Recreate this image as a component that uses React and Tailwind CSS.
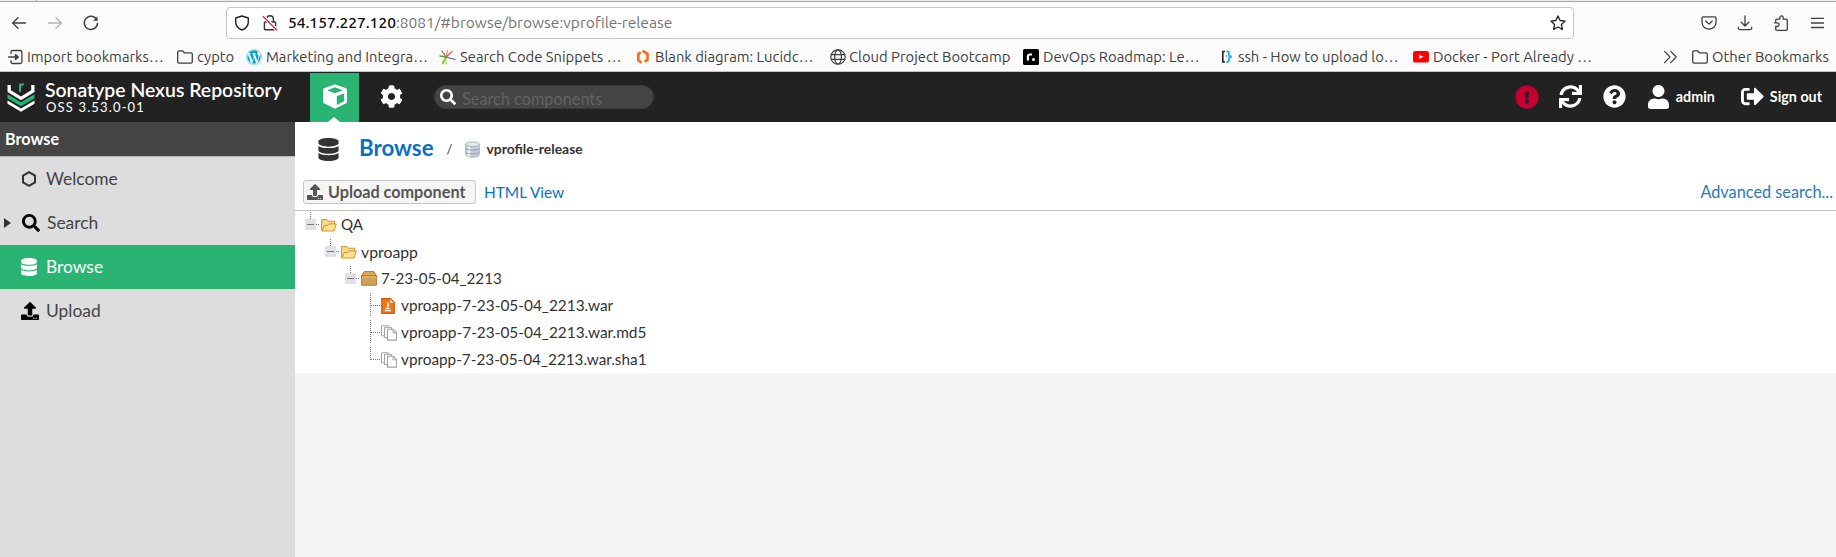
import React from 'react';
import { FaCog, FaSearch, FaExclamationCircle, FaSync, FaQuestionCircle, FaUser, FaSignOutAlt, FaDatabase, FaUpload, FaWordpress } from 'react-icons/fa';

const chromeFont = "font-['Ubuntu','Noto_Sans',sans-serif]";
const appFont = "font-['Proxima_Nova','Lato',sans-serif]";

function Line({ size = 16, className = '', width = 1.3, children }) {
  return (
    <svg width={size} height={size} viewBox="0 0 16 16" fill="none" stroke="currentColor" strokeWidth={width} strokeLinecap="round" strokeLinejoin="round" className={`shrink-0 ${className}`}>
      {children}
    </svg>
  );
}

const Folder = () => (
  <Line><path d="M.7 12.800V3.200c0-.8.6-1.400 1.400-1.400h3.400l1.800 2h6.600c.8 0 1.400.6 1.400 1.400v7.600c0 .8-.6 1.400-1.400 1.400H2.100c-.8 0-1.400-.6-1.400-1.400z" /></Line>
);

const Import = () => (
  <Line><path d="M3 4.400V3c0-.9.7-1.500 1.500-1.500h7.800c.9 0 1.600.7 1.600 1.500v10c0 .9-.7 1.500-1.600 1.500H4.500C3.700 14.500 3 13.900 3 13v-1.400M.6 8h8.600" /><path d="M7.500 5.400 10.400 8l-2.900 2.600z" fill="currentColor" /></Line>
);

const Snippets = () => (
  <svg width="17" height="16" viewBox="0 0 17 16" fill="none" strokeWidth="1.2" strokeLinecap="round" className="shrink-0">
    <path d="M7 8 3.500 14.500" stroke="#7ac943" strokeWidth="1.800" />
    <path d="M7 8 1 7" stroke="#57a639" strokeWidth="1.600" />
    <path d="M7 8 7 15" stroke="#b9d94c" />
    <path d="M7 8 3 2" stroke="#7a5aa8" />
    <path d="M7 8 8.500 1" stroke="#f0a030" />
    <path d="M7 8 13 2.500" stroke="#e0506a" />
    <path d="M7 8 16 10.500" stroke="#5b5aa8" />
  </svg>
);

const Lucid = () => (
  <svg width="14" height="16" viewBox="0 0 14 16" fill="none" stroke="#f96b13" strokeWidth="2.600" className="shrink-0">
    <path d="M4.800 3.400 2.300 5v6.200l3.200 2.500" />
    <path d="M6.500 1.900l5 2.900v6L8.600 12.600" />
  </svg>
);

const Globe = () => (
  <Line width={1.2}><circle cx="8" cy="8" r="7.200" /><ellipse cx="8" cy="8" rx="3.400" ry="7.200" /><path d="M1.300 5.600h13.400M1.300 10.400h13.400" /></Line>
);

const Roadmap = () => (
  <svg width="16" height="16" viewBox="0 0 16 16" className="shrink-0">
    <rect width="16" height="16" rx="1.500" />
    <path d="M4.900 11.500V7.600c0-1.400.8-2.100 2.200-2.100H9" fill="none" stroke="#fff" strokeWidth="2.200" />
    <circle cx="10.500" cy="10.600" r="1.500" fill="#fff" />
  </svg>
);

const Braces = () => (
  <svg width="12" height="14" viewBox="0 0 12 14" fill="none" className="shrink-0">
    <path d="M4 1.500H1.800v10.500H4" stroke="#222" strokeWidth="1.600" />
    <path d="M5.500 1.500h1c1.200 0 1.500.6 1.500 1.600v1.700c0 1 .5 1.700 1.900 1.700v.6c-1.400 0-1.900.7-1.900 1.700v1.700c0 1-.3 1.500-1.500 1.500h-1" stroke="#1fb6f4" strokeWidth="1.900" />
    <path d="M5.600 5.600v.9" stroke="#222" strokeWidth="1.200" />
  </svg>
);

const Youtube = () => (
  <svg width="16" height="12" viewBox="0 0 16 12" className="shrink-0">
    <rect width="16" height="11.500" rx="2.600" fill="#f00" />
    <path d="M6.200 3.500v4.600l4.200-2.300z" fill="#fff" />
  </svg>
);

const bookmarks = [
  { label: 'Import bookmarks…', icon: <Import />, box: 'w-[169px] gap-[3px]' },
  { label: 'cypto', icon: <Folder />, box: 'w-[69px] gap-[4px]' },
  { label: 'Marketing and Integra…', icon: <FaWordpress className="size-4 shrink-0 text-[#0a9fd8]" />, box: 'w-[193px] gap-[4px]' },
  { label: 'Search Code Snippets …', icon: <Snippets />, box: 'w-[197px] gap-[4px]' },
  { label: 'Blank diagram: Lucidc…', icon: <Lucid />, box: 'w-[194px] gap-[5px]' },
  { label: 'Cloud Project Bootcamp', icon: <Globe />, box: 'w-[193px] gap-[3px]' },
  { label: 'DevOps Roadmap: Le…', icon: <Roadmap />, box: 'w-[198px] gap-[4px]' },
  { label: 'ssh - How to upload lo…', icon: <Braces />, box: 'w-[192px] gap-[5px]' },
  { label: 'Docker - Port Already …', icon: <Youtube />, box: 'gap-[4px]' },
];

function BrowserChrome() {
  return (
    <div className={`flex h-[72px] flex-col border-b border-[#c4c4c4] bg-[#fbfbfb] text-[#404040] ${chromeFont}`}>
      <div className="flex h-[2px] shrink-0 border-b border-[#a6a6a6] bg-[#ededed]">
        <div className="w-[37px] border-r border-[#a6a6a6]" />
      </div>
      <div className="flex h-[41px] shrink-0 items-center">
        <Line className="ml-[11px]" width={1.3}><path d="M14.500 8H1.500M7 2.800 1.600 8 7 13.200" /></Line>
        <Line className="ml-5 text-[#b3b3b3]"><path d="M1.500 8h13M9 2.800 14.400 8 9 13.200" /></Line>
        <Line className="ml-5" width={1.5}><path d="M13.800 4.800A6.600 6.600 0 1 0 14.500 8.600" /><path d="M14.500 1.300v4.500H10z" fill="currentColor" stroke="none" /></Line>
        <div className="ml-[127px] flex h-8 w-[1348px] items-center rounded border border-[#c4c4c4] bg-white">
          <Line className="ml-[7px] text-[#222]" width={1.4}><path d="M8 1 14.300 3v4c0 3.800-2.300 6.500-6.300 8-4-1.500-6.300-4.200-6.300-8V3z" /></Line>
          <Line className="ml-[12px] text-[#333]" width={1.4}>
            <path d="M4.600 7V4.200a3.400 3.400 0 0 1 6.800 0V7M3.200 7h9.600c.5 0 .8.300.8.800v5.900c0 .7-.5 1.100-1.100 1.100h-9c-.6 0-1.100-.4-1.100-1.100V7.800c0-.5.300-.8.800-.8z" />
            <path d="M1.500 1.500 15 15" stroke="#fff" strokeWidth="3.500" />
            <path d="M1.200 1.500 14.800 15" stroke="#e22850" />
          </Line>
          <div className="ml-[10px] text-[15.550px] whitespace-pre text-[#737373]"><span className="font-medium text-[#0c0c0d]">54.157.227.120</span>:8081/#browse/browse:vprofile-release</div>
          <Line className="mr-[7px] ml-auto text-[#222]" width={1.3}><path d="m8 .9 2.100 4.600 5 .6-3.700 3.400 1 5-4.400-2.500-4.400 2.500 1-5L.9 6.100l5-.6z" /></Line>
        </div>
        <div className="flex items-center gap-5 pl-[127px]">
          <Line><path d="M2.200 1.900h11.600c.7 0 1.200.5 1.200 1.100v4.500a7 6.600 0 0 1-14 0V3c0-.6.5-1.100 1.200-1.100zM4.800 6 8 9.100 11.200 6" /></Line>
          <Line><path d="M8 .8v10M4.200 7.200 8 11l3.800-3.800M1.300 12.200v.9c0 .9.600 1.500 1.500 1.500h10.400c.9 0 1.500-.6 1.500-1.500v-.9" /></Line>
          <Line><path d="M2.700 6.500V5.200c0-.7.400-1.100 1.100-1.100h3V2.600a1.700 1.700 0 0 1 3.400 0v1.500h3c.7 0 1.100.4 1.100 1.100v9c0 .7-.4 1.100-1.100 1.100H3.800c-.7 0-1.100-.4-1.100-1.100v-2.700h1.500a1.800 1.800 0 0 0 0-3.600H1.500" /></Line>
          <Line width={1.4}><path d="M2.500 3.400h12M2.500 8h12M2.500 12.500h12" /></Line>
        </div>
      </div>
      <div className="flex h-[28px] items-center pl-2 text-[14.800px] whitespace-nowrap">
        {bookmarks.map((b) => (
          <div key={b.label} className={`flex shrink-0 items-center ${b.box}`}>{b.icon}<span>{b.label}</span></div>
        ))}
        <div className="ml-auto flex items-center pr-[7px]">
          <Line className="mr-[14px]" width={1.2}><path d="M2.500 2.300 8 8l-5.500 5.700M8.700 2.300 14.200 8l-5.500 5.700" /></Line>
          <Folder />
          <span className="ml-1">Other Bookmarks</span>
        </div>
      </div>
    </div>
  );
}

const NexusLogo = () => (
  <svg width="28" height="30" viewBox="0 0 28 30" fill="none" className="shrink-0">
    <path d="M.5 3v7L14 18.300 27.500 10V3h-3.300v5.200L14 14.600 3.800 8.200V3z" fill="#fff" />
    <path d="M.5 12.300v4L14 24.300l13.500-8v-4L14 20.300z" fill="#1db974" />
    <path d="M.5 18.500v3.300L14 29.800l13.500-8v-3.300L14 26.500z" fill="#fff" />
    <path d="M13 10V1.500M13 5c.3-2 1.500-3 4-2.800" stroke="#1db974" strokeWidth="2" />
  </svg>
);

const CubeIcon = () => (
  <svg width="26" height="25" viewBox="0 0 26 25" className="shrink-0">
    <path d="M13 .8 24.500 5v13.500L13 24.200 1.500 18.500V5z" fill="#fff" stroke="#fff" strokeWidth="1" strokeLinejoin="round" />
    <path d="M13 3.300 20.800 6.200 13 9.300 5.200 6.200z" fill="#29b473" />
    <path d="M14.800 12.300 22.200 9.300v7.900l-7.400 3.700z" fill="#29b473" />
  </svg>
);

function Header() {
  return (
    <div className="flex h-[50px] shrink-0 items-center bg-[#222] text-white">
      <div className="flex w-[310px] items-center pl-[7px]">
        <NexusLogo />
        <div className="ml-[10px] whitespace-nowrap">
          <div className="text-[19.400px] leading-[20px] font-semibold">Sonatype Nexus Repository</div>
          <div className="pl-px text-[13px] leading-[15px] tracking-[1.150px]">OSS 3.53.0-01</div>
        </div>
      </div>
      <div className="relative mt-px flex h-[49px] w-[49px] items-center justify-center bg-[#29b473]">
        <div className="-mt-[3px]"><CubeIcon /></div>
        <div className="absolute bottom-0 left-[18px] border-x-[6px] border-b-[5px] border-x-transparent border-b-white" />
      </div>
      <FaCog className="-mt-[2px] ml-[21px] size-[23px]" />
      <div className="ml-[31px] flex h-[24px] w-[220px] items-center rounded-full border border-[#393939] bg-[#444]">
        <FaSearch className="ml-[5px] size-[16px]" />
        <span className="ml-[6px] pt-[3px] text-[16.300px] leading-5 text-[#626262]">Search components</span>
      </div>
      <div className="ml-auto flex items-center pr-[14px] pb-px text-[14.300px] font-bold">
        <FaExclamationCircle className="size-[24px] text-[#c70032]" />
        <FaSync className="ml-[20px] size-[23px]" />
        <FaQuestionCircle className="ml-[21px] size-[23px]" />
        <FaUser className="ml-[21px] h-[24px] w-[23px]" />
        <span className="ml-[6px]">admin</span>
        <FaSignOutAlt className="ml-[26px] size-[23px]" />
        <span className="ml-[6px]">Sign out</span>
      </div>
    </div>
  );
}

function Sidebar() {
  const row = 'flex h-11 items-center text-[17.400px] text-[#444]';
  return (
    <div className="flex w-[295px] shrink-0 flex-col bg-[#ddd]">
      <div className="flex h-[35px] items-center border-b border-[#b8b8b8] bg-[#444] pl-[5px] text-[16.200px] font-bold text-white">Browse</div>
      <div className={row}>
        <svg width="16" height="16" viewBox="0 0 16 16" className="ml-[21px]"><path d="M8 1.200 14 4.600v6.800L8 14.800 2 11.400V4.600z" fill="none" stroke="#333" strokeWidth="2" /></svg>
        <span className="ml-[9px]">Welcome</span>
      </div>
      <div className={row}>
        <svg width="7" height="10" viewBox="0 0 7 10" className="ml-[4px]"><path d="M0 0l7 5-7 5z" fill="#333" /></svg>
        <FaSearch className="ml-[11px] size-[18px] text-black" />
        <span className="ml-[7px]">Search</span>
      </div>
      <div className="flex h-11 items-center bg-[#29b473] text-[17.400px] text-white">
        <FaDatabase className="ml-[20px] size-[18px]" />
        <span className="ml-[8px]">Browse</span>
      </div>
      <div className={row}>
        <FaUpload className="ml-[21px] size-[18px] text-black" />
        <span className="ml-[7px]">Upload</span>
      </div>
    </div>
  );
}

const RepoIcon = () => (
  <svg width="15" height="17" viewBox="0 0 15 17" className="shrink-0">
    <path d="M.8 3v10.500C.8 15 3.500 16.200 7.500 16.200s6.700-1.200 6.700-2.700V3z" fill="#c5ced8" stroke="#a3adb8" />
    <path d="M4 5v10.500" stroke="#edf2f7" strokeWidth="3" />
    <ellipse cx="7.500" cy="3.200" rx="6.700" ry="2.300" fill="#e6ebf0" stroke="#a8b1ba" />
    <path d="M.8 7.400c1.300 2.200 12 2.200 13.400 0M.8 11.200c1.300 2.200 12 2.200 13.400 0" fill="none" stroke="#8d99a5" strokeWidth=".9" />
  </svg>
);

const OpenFolder = () => (
  <svg width="16" height="14" viewBox="0 0 16 14" className="shrink-0">
    <path d="M.6 12.800V1.600h5l1.200 1.600h6.700v3" fill="#f5d98c" stroke="#cf9436" />
    <path d="M.8 13 3.400 7.500h3.400l1.500-1.600h7L13 13z" fill="#fde28a" stroke="#cf9436" strokeLinejoin="round" />
  </svg>
);

const Crate = () => (
  <svg width="16" height="15" viewBox="0 0 16 15" className="shrink-0">
    <path d="M3.200.6h9.600l2.600 4.200H.6z" fill="#d9aa60" stroke="#b27a30" strokeLinejoin="round" />
    <path d="M.6 4.800h14.800v9.400H.6z" fill="#d2a057" stroke="#b27a30" strokeLinejoin="round" />
    <path d="M1.200 6h13.600" stroke="#ecc689" />
  </svg>
);

const WarFile = () => (
  <svg width="14" height="16" viewBox="0 0 14 16" className="shrink-0">
    <path d="M.8.8h8.700l3.700 3.700v10.700H.8z" fill="#f07818" stroke="#d95b08" strokeWidth="1.400" strokeLinejoin="round" />
    <path d="M9.500 1.500v3h3" fill="#ffc890" stroke="#fff" strokeWidth=".7" />
    <path d="M6.800 4.500v3.500M8 6.500 6.500 9.300M4.500 10.500h4.200M3.800 12.600h6" stroke="#fff" strokeWidth="1.300" />
  </svg>
);

const Copies = () => (
  <svg width="16" height="16" viewBox="0 0 16 16" fill="#fff" stroke="#a3a3a3" className="shrink-0">
    <path d="M.5.8h7v10h-7z" />
    <path d="M3.500 2.300h7v10.400h-7z" />
    <path d="M6.500 4.300h5.800l3.200 3.200v7.600h-9z" strokeWidth="1.100" />
    <path d="M12 4.500v3.300h3.300" fill="none" />
  </svg>
);

const tree = [
  { label: 'QA', icon: <OpenFolder />, pad: 'pl-[9px]', gap: 'ml-[4px] text-[15.200px]' },
  { label: 'vproapp', icon: <OpenFolder />, pad: 'pl-[29px]', gap: 'ml-[4px] text-[15.800px]' },
  { label: '7-23-05-04_2213', icon: <Crate />, pad: 'pl-[49px]', gap: 'ml-[4px] text-[15.200px]' },
  { label: 'vproapp-7-23-05-04_2213.war', icon: <WarFile />, pad: 'pl-[69px]', gap: 'ml-[6px] text-[15.400px]', leaf: true },
  { label: 'vproapp-7-23-05-04_2213.war.md5', icon: <Copies />, pad: 'pl-[69px]', gap: 'ml-[4px] text-[15.400px]', leaf: true },
  { label: 'vproapp-7-23-05-04_2213.war.sha1', icon: <Copies />, pad: 'pl-[69px]', gap: 'ml-[4px] text-[15.300px]', leaf: true, last: true },
];

function Elbow({ leaf, last }) {
  if (leaf) {
    return (
      <svg width="17" height="27" viewBox="0 0 17 27" stroke="#777" strokeDasharray="1 1" fill="none" className="shrink-0">
        <path d={last ? 'M6.500 1v13' : 'M6.500 1v23'} />
        <path d="M7 13.500h9" />
      </svg>
    );
  }
  return (
    <svg width="17" height="27" viewBox="0 0 17 27" fill="none" className="shrink-0">
      <path d="M11.500 1v7M12 14.500h0" stroke="none" />
      <path d="M6.500 1v7M12 13.500h4" stroke="#777" strokeDasharray="1 1" />
      <path d="M1 8h11v11H1z" fill="#dfe1e5" />
      <path d="M3 13.500h7" stroke="#777" />
    </svg>
  );
}

function Main() {
  return (
    <div className="flex min-w-0 flex-1 flex-col bg-[#f4f4f4]">
      <div className="flex h-[52px] items-center bg-white">
        <FaDatabase className="mt-[2px] ml-[22px] size-[23px] text-[#333]" />
        <span className="ml-[19px] text-[22.300px] leading-none font-bold text-[#0971c4]">Browse</span>
        <span className="mt-[4px] ml-[13px] text-[13px] text-[#333]">/</span>
        <div className="mt-[2px] ml-[13px]"><RepoIcon /></div>
        <span className="mt-[3px] ml-[6px] text-[13.900px] font-bold text-[#333]">vprofile-release</span>
      </div>
      <div className="flex h-[37px] items-start border-b border-[#bcbcbc] bg-white pt-[6px]">
        <div className="ml-2 flex h-[24px] w-[173px] items-center rounded-[3px] border border-[#c5c5c5] bg-[#f5f5f5] pl-[3px] text-[16.200px] font-bold text-[#555]">
          <FaUpload className="size-4" />
          <span className="ml-[5px] whitespace-nowrap">Upload component</span>
        </div>
        <span className="ml-[8px] text-[15.400px] leading-6 text-[#0971c4]">HTML View</span>
        <span className="mr-[3px] ml-auto text-[16.300px] leading-6 text-[#2a7ab8]">Advanced search...</span>
      </div>
      <div className="bg-white text-[#333]">
        {tree.map((n) => (
          <div key={n.label} className={`flex h-[27px] items-center ${n.pad}`}>
            <Elbow leaf={n.leaf} last={n.last} />
            {n.icon}
            <span className={`whitespace-nowrap ${n.gap}`}>{n.label}</span>
          </div>
        ))}
      </div>
    </div>
  );
}

export default function App() {
  return (
    <div className="flex h-[557px] w-[1836px] flex-col overflow-hidden">
      <BrowserChrome />
      <div className={`flex flex-1 flex-col ${appFont}`}>
        <Header />
        <div className="flex flex-1">
          <Sidebar />
          <Main />
        </div>
      </div>
    </div>
  );
}
